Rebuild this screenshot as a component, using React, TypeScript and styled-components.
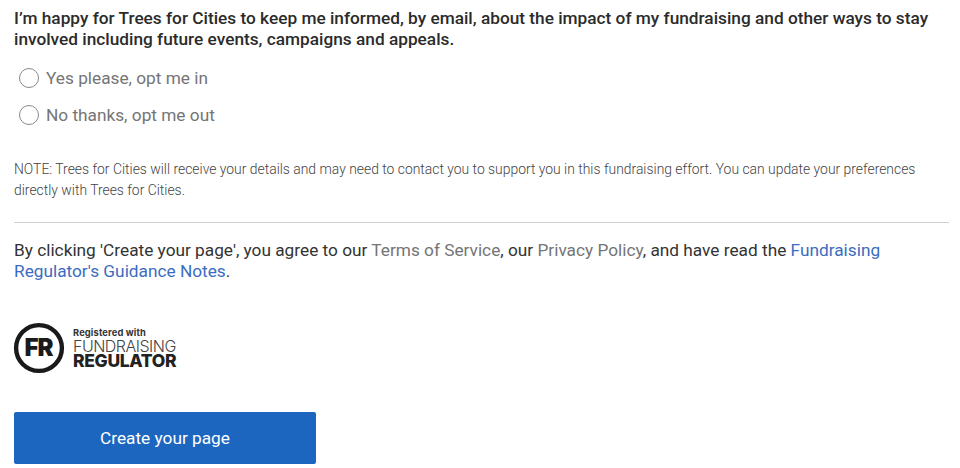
import styled, { createGlobalStyle } from 'styled-components';

const GlobalStyle = createGlobalStyle`
  html, body {
    margin: 0;
    padding: 0;
    background: #fff;
  }
  body {
    font-family: Roboto, 'Liberation Sans', sans-serif;
    overflow: hidden;
  }
`;

export default function App() {
  return (
    <Page>
      <GlobalStyle />
      <Consent>
        I’m happy for Trees for Cities to keep me informed, by email, about the impact of my fundraising and other ways to stay
        involved including future events, campaigns and appeals.
      </Consent>
      <Options>
        <Option>
          <RadioInput type="radio" name="optin" />
          Yes please, opt me in
        </Option>
        <Option>
          <RadioInput type="radio" name="optin" />
          No thanks, opt me out
        </Option>
      </Options>
      <Note>
        NOTE: Trees for Cities will receive your details and may need to contact you to support you in this fundraising effort. You can
        update your preferences directly with Trees for Cities.
      </Note>
      <Divider />
      <Terms>
        By clicking 'Create your page', you agree to our <GreyLink>Terms of Service</GreyLink>, our <GreyLink>Privacy Policy</GreyLink>,
        and have read the <BlueLink>Fundraising</BlueLink> <BlueLink>Regulator's Guidance Notes</BlueLink>.
      </Terms>
      <Logo>
        <svg width="52" height="52" viewBox="0 0 52 52">
          <circle cx="26" cy="26" r="22.9" fill="none" stroke="#1a1a1a" strokeWidth="4.4" />
          <LogoMark x="25.5" y="34" textAnchor="middle">FR</LogoMark>
        </svg>
        <LogoText>
          <LogoSmall>Registered with</LogoSmall>
          <LogoLight>FUNDRAISING</LogoLight>
          <LogoBold>REGULATOR</LogoBold>
        </LogoText>
      </Logo>
      <SubmitButton type="button">Create your page</SubmitButton>
    </Page>
  );
}

const Page = styled.div`
  width: 935px;
  height: 458px;
  padding: 8px 11px 0 14px;
  overflow: hidden;
`;

const Consent = styled.p`
  margin: 0;
  font-size: 17.25px;
  font-weight: 500;
  line-height: 21px;
  color: #2b2b2b;
`;

const Options = styled.div`
  display: flex;
  flex-direction: column;
  gap: 13px;
  margin-top: 16px;
  padding-left: 5px;
`;

const Option = styled.label`
  display: flex;
  align-items: center;
  gap: 7px;
  height: 24px;
  font-size: 17.25px;
  color: #757575;
`;

const RadioInput = styled.input`
  appearance: none;
  width: 20px;
  height: 20px;
  margin: 0;
  border: 1.5px solid #8a8a8a;
  border-radius: 50%;
  background: #fff;
`;

const Note = styled.p`
  margin: 32px 0 0;
  font-size: 13.9px;
  font-weight: 300;
  line-height: 21px;
  color: #444;
`;

const Divider = styled.hr`
  margin: 21px 0 0;
  border: 0;
  border-top: 1px solid #d0d0d0;
`;

const Terms = styled.p`
  margin: 17px 0 0;
  font-size: 17.25px;
  line-height: 21px;
  color: #333;
`;

const GreyLink = styled.a`
  color: #757575;
`;

const BlueLink = styled.a`
  color: #3b6cc0;
`;

const Logo = styled.div`
  display: flex;
  align-items: center;
  gap: 8px;
  margin-top: 40px;
  height: 52px;
  margin-left: -1px;
`;

const LogoMark = styled.text`
  font-family: Inter, 'Liberation Sans', sans-serif;
  font-size: 24px;
  font-weight: 900;
  letter-spacing: -1px;
  fill: #1a1a1a;
`;

const LogoText = styled.div`
  display: flex;
  flex-direction: column;
  font-family: Inter, 'Liberation Sans', sans-serif;
  color: #222;
`;

const LogoSmall = styled.span`
  font-size: 9.3px;
  font-weight: 700;
  line-height: 10px;
  letter-spacing: 0.15px;
  margin-bottom: 1px;
  color: #333;
`;

const LogoLight = styled.span`
  font-size: 16px;
  font-weight: 300;
  line-height: 15px;
  letter-spacing: -0.5px;
  color: #444;
`;

const LogoBold = styled.span`
  font-size: 17.5px;
  font-weight: 800;
  line-height: 14px;
  letter-spacing: -0.35px;
`;

const SubmitButton = styled.button`
  display: block;
  width: 302px;
  height: 52px;
  margin-top: 38px;
  border: 0;
  border-radius: 2px;
  background: #1c66c0;
  color: #fff;
  font-family: inherit;
  font-size: 17.25px;
  font-weight: 400;
`;
